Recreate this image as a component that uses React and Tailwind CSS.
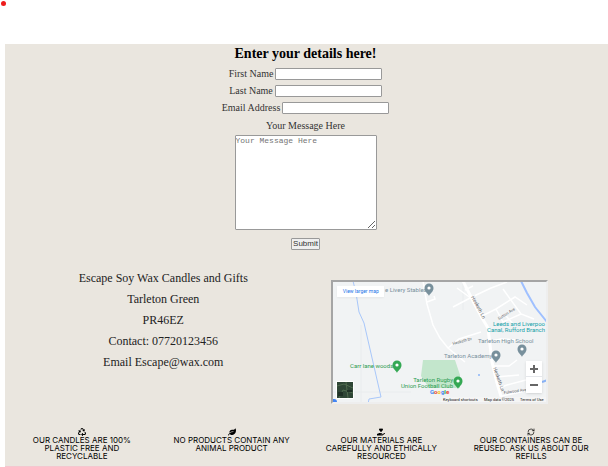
import { FaRecycle, FaLeaf, FaHandHoldingHeart } from "react-icons/fa";
import { RefreshCw } from "lucide-react";

const fields = [
  { id: "first-name", label: "First Name", type: "text" },
  { id: "last-name", label: "Last Name", type: "text" },
  { id: "email", label: "Email Address", type: "email" },
];

const contact = [
  "Escape Soy Wax Candles and Gifts",
  "Tarleton Green",
  "PR46EZ",
  "Contact: 07720123456",
  "Email Escape@wax.com",
];

const promises = [
  { Icon: FaRecycle, lines: ["OUR CANDLES ARE 100%", "PLASTIC FREE AND", "RECYCLABLE"] },
  { Icon: FaLeaf, lines: ["NO PRODUCTS CONTAIN ANY", "ANIMAL PRODUCT"] },
  { Icon: FaHandHoldingHeart, lines: ["OUR MATERIALS ARE", "CAREFULLY AND ETHICALLY", "RESOURCED"] },
  { Icon: RefreshCw, lines: ["OUR CONTAINERS CAN BE", "REUSED. ASK US ABOUT OUR", "REFILLS"] },
];

function Pin({ x, y, color }) {
  return (
    <g transform={`translate(${x} ${y})`}>
      <path d="M0 7C-.8 4.500-4.500 3-4.500-1a4.500 4.500 0 0 1 9 0C4.500 3 .8 4.500 0 7Z" fill={color} />
      <circle cy="-1" r="1.600" fill="#fff" />
    </g>
  );
}

function MapArt() {
  return (
    <svg
      viewBox="2 2 213 120"
      className="block h-full w-full"
      fontFamily='Roboto, "Liberation Sans", sans-serif'
      fontSize="6"
      role="img"
      aria-label="Map of Tarleton"
    >
      <rect width="217" height="124" fill="#f1f3f4" />
      <path d="M2 112H80M30 45V124M132 2V30" stroke="#e9ecee" fill="none" />
      <path d="M92 80H124L129 95V108H98L90 96Z" fill="#c3e6cc" />
      <g stroke="#fff" fill="none" strokeWidth="1.500">
        <path d="M92 1L96 24L102 45L109 58L117 68L134 82" />
        <path d="M96 22L104 19L103 16M117 68L128 59L150 52M122 27L141 17L160 8L176 2M141 19L126 8M134 10L142 6M151 36L165 29L184 17L196 25M172 9L190 34L203 39M165 29L172 42L190 34M175 36L184 46M155 62L170 59L187 60M163 86H178L186 80M165 97L188 95M168 108L176 105L195 100M171 116L194 111" />
      </g>
      <path d="M132 1L143 23L151 38L157 48L161 82L166 103L172 123" stroke="#fff" strokeWidth="3" fill="none" />
      <path d="M22 1L25 13L28 32L33 43L50 117L38 119L37 124" stroke="#a8c7fa" fill="none" />
      <path d="M190 1L196 13L204 27L216 42" stroke="#9fc0ff" strokeWidth="2" fill="none" />
      <path d="M211 102L217 100" stroke="#8ab4f8" strokeWidth="2" />
      <circle cx="148" cy="95" r="1" fill="#8ab4f8" />
      <circle cx="3" cy="122" r="3" fill="#4285f4" />

      <g fill="#5f6368" fontSize="5">
        <text transform="translate(140 17) rotate(62)">Hesketh Ln</text>
        <text transform="translate(162 88) rotate(70)">Hesketh Ln</text>
        <text transform="translate(168 40) rotate(-32)" fontSize="4">Sutton Ave</text>
        <text transform="translate(122 65) rotate(-15)" fontSize="4">Hesketh Dr</text>
        <text transform="translate(173 114) rotate(-8)" fontSize="4">Fulwood Ave</text>
      </g>

      <g fill="#78909c">
        <text x="54" y="12">e Livery Stables</text>
        <text x="147" y="63">Tarleton High School</text>
        <text x="113" y="78">Tarleton Academy</text>
      </g>
      <g fill="#12a0a8">
        <text x="214" y="46" textAnchor="end">Leeds and Liverpoo</text>
        <text x="214" y="52" textAnchor="end">Canal, Rufford Branch</text>
      </g>
      <g fill="#2c9c51">
        <text x="19" y="88">Carr lane woods</text>
        <text x="122" y="102" textAnchor="end">Tarleton Rugby</text>
        <text x="122" y="108" textAnchor="end">Union Football Club</text>
      </g>

      <Pin x={98} y={9} color="#78909c" />
      <Pin x={165} y={76} color="#78909c" />
      <Pin x={191} y={70} color="#78909c" />
      <Pin x={66} y={86} color="#34a853" />
      <Pin x={127} y={102} color="#34a853" />

      <text x="99" y="114" fontWeight="700">
        <tspan fill="#4285f4">G</tspan>
        <tspan fill="#ea4335">o</tspan>
        <tspan fill="#fbbc04">o</tspan>
        <tspan fill="#4285f4">g</tspan>
        <tspan fill="#34a853">l</tspan>
        <tspan fill="#ea4335">e</tspan>
      </text>
      <rect x="110" y="117" width="107" height="6" fill="#f5f5f5" />
      <g fill="#111" fontSize="4">
        <text x="112" y="121">Keyboard shortcuts</text>
        <text x="153" y="121">Map data ©2025</text>
        <text x="189" y="121">Terms of Use</text>
      </g>

      <rect x="5" y="101" width="18" height="18" rx="1" fill="#fff" />
      <rect x="6" y="102" width="16" height="16" fill="#2f4636" />
      <path d="M6 106L13 104L22 108M8 118L12 110L22 113M15 102L17 118" stroke="#4f6a4e" fill="none" />
      <path d="M7 112H12V116H7ZM16 110H21V112H16Z" fill="#1f3026" />
    </svg>
  );
}

function MapPanel() {
  return (
    <div className="relative h-[124px] w-[217px] overflow-hidden border-2 border-t-[#a5a5a5] border-r-[#eeeeee] border-b-[#eeeeee] border-l-[#a5a5a5]">
      <MapArt />
      <a
        href="#map"
        className="absolute top-1 left-1 flex h-[11px] w-[47px] items-center justify-center bg-white font-[Roboto,sans-serif] text-[5px] whitespace-nowrap text-[#1a73e8] shadow-xs"
      >
        View larger map
      </a>
      <div className="absolute right-1 bottom-[9px] flex w-4 flex-col divide-y divide-gray-200 bg-white shadow-sm">
        <button type="button" aria-label="Zoom in" className="flex h-4 items-center justify-center">
          <svg viewBox="0 0 8 8" className="size-2" stroke="#666" strokeWidth="2">
            <path d="M0 4H8M4 0V8" />
          </svg>
        </button>
        <button type="button" aria-label="Zoom out" className="flex h-4 items-center justify-center">
          <svg viewBox="0 0 8 8" className="size-2" stroke="#666" strokeWidth="2">
            <path d="M0 4H8" />
          </svg>
        </button>
      </div>
    </div>
  );
}

export default function App() {
  return (
    <div className="bg-white font-['Liberation_Serif',serif] text-black">
      <header className="h-11 px-px pt-px">
        <span className="block size-[5px] rounded-full bg-[#ee1c1c]" />
      </header>

      <main className="ml-[5px] border-b border-[#f5c6cf] bg-[#eae6df]">
        <form className="flex flex-col items-center pr-0.5 text-[10px] leading-3 text-[#333]" onSubmit={(e) => e.preventDefault()}>
          <h1 className="mb-1 text-[14px] leading-5 font-bold text-black">Enter your details here!</h1>
          {fields.map(({ id, label, type }) => (
            <div key={id} className="mb-[5px] flex items-center gap-0.5">
              <label htmlFor={id}>{label}</label>
              <input id={id} type={type} className="h-3 w-[107px] rounded-[1px] border border-[#999] bg-white px-px" />
            </div>
          ))}
          <label htmlFor="message" className="pt-px pb-[3px]">Your Message Here</label>
          <textarea
            id="message"
            placeholder="Your Message Here"
            className="block h-[95px] w-[142px] resize rounded-[1px] border border-[#999] bg-white font-['Liberation_Mono',monospace] text-[8px] leading-[10px] placeholder:text-[#757575]"
          />
          <button
            type="submit"
            className="mt-2 h-3 rounded-[1px] border border-[#999] bg-[#efefef] px-px font-['Liberation_Sans',sans-serif] text-[8px] leading-[10px] text-[#333]"
          >
            Submit
          </button>
        </form>

        <section className="mt-[30px] grid grid-cols-2 justify-items-center pr-[30px] pl-5">
          <address className="-mt-3 text-center text-[12px] leading-[21px] whitespace-nowrap text-[#222] not-italic">
            {contact.map((line) => (
              <p key={line}>{line}</p>
            ))}
          </address>
          <MapPanel />
        </section>

        <footer className="mt-6 grid grid-cols-4 px-0.5 pb-[6px] text-center font-[Inter,sans-serif] text-[8px] leading-[8px] whitespace-nowrap">
          {promises.map(({ Icon, lines }) => (
            <div key={lines[0]} className="flex flex-col items-center">
              <Icon className="size-2" />
              {lines.map((line) => (
                <p key={line}>{line}</p>
              ))}
            </div>
          ))}
        </footer>
      </main>
    </div>
  );
}
